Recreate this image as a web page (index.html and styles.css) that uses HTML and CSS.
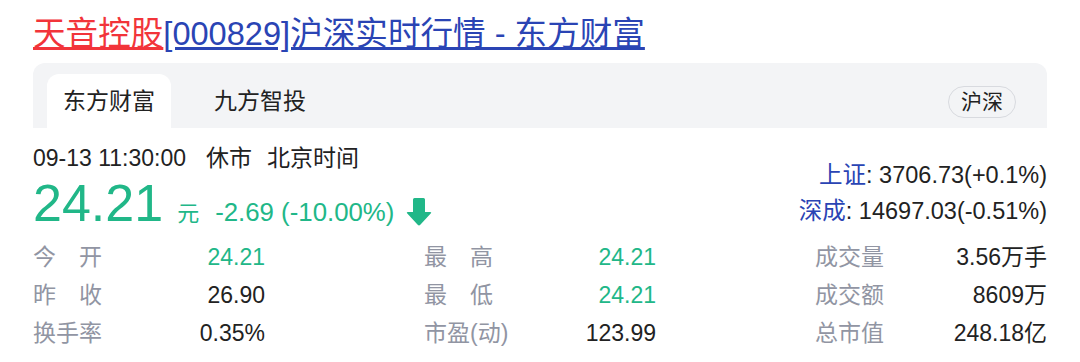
FILE: index.html
```html
<!DOCTYPE html>
<html lang="zh-CN">
<head>
<meta charset="utf-8">
<title>天音控股[000829]沪深实时行情 - 东方财富</title>
<link rel="stylesheet" href="styles.css">
</head>
<body>
<div class="page">
  <h1 class="title"><a class="title-link" href="#"><span class="title-red">天音控股</span><span class="title-blue">[000829]沪深实时行情 - 东方财富</span></a></h1>

  <div class="card">
    <div class="tabbar">
      <div class="tab tab-active">东方财富</div>
      <div class="tab">九方智投</div>
      <div class="pill">沪深</div>
    </div>

    <div class="quote">
      <div class="quote-main">
        <div class="quote-time"><span>09-13 11:30:00</span><span class="time-status">休市</span><span class="time-zone">北京时间</span></div>
        <div class="quote-price"><span class="price">24.21</span><span class="unit">元</span><span class="change">-2.69 (-10.00%)</span><svg class="arrow" width="26" height="28" viewBox="0 0 26 28"><path d="M7 1.5 Q7 0 8.5 0 H17.5 Q19 0 19 1.5 V14 H24 Q26 14 24.7 15.5 L14.3 26.8 Q13 28.2 11.7 26.8 L1.3 15.5 Q0 14 2 14 H7 Z"/></svg></div>
      </div>
      <div class="quote-index">
        <div class="index-line"><span class="index-name">上证</span>: 3706.73(+0.1%)</div>
        <div class="index-line"><span class="index-name">深成</span>: 14697.03(-0.51%)</div>
      </div>
    </div>

    <div class="stats">
      <div class="stat-col">
        <div class="stat-row"><span class="stat-label">今开</span><span class="stat-value down">24.21</span></div>
        <div class="stat-row"><span class="stat-label">昨收</span><span class="stat-value">26.90</span></div>
        <div class="stat-row"><span class="stat-label">换手率</span><span class="stat-value">0.35%</span></div>
      </div>
      <div class="stat-col">
        <div class="stat-row"><span class="stat-label">最高</span><span class="stat-value down">24.21</span></div>
        <div class="stat-row"><span class="stat-label">最低</span><span class="stat-value down">24.21</span></div>
        <div class="stat-row"><span class="stat-label">市盈(动)</span><span class="stat-value">123.99</span></div>
      </div>
      <div class="stat-col">
        <div class="stat-row"><span class="stat-label">成交量</span><span class="stat-value">3.56万手</span></div>
        <div class="stat-row"><span class="stat-label">成交额</span><span class="stat-value">8609万</span></div>
        <div class="stat-row"><span class="stat-label">总市值</span><span class="stat-value">248.18亿</span></div>
      </div>
    </div>
  </div>
</div>
</body>
</html>
```

FILE: styles.css
```css
html, body {
  margin: 0;
  padding: 0;
  background: #ffffff;
}

body {
  font-family: "Liberation Sans", Arial, "Noto Sans CJK SC", sans-serif;
  color: #222222;
  overflow: hidden;
}

.page {
  padding: 14px 33px 0 33px;
}

.title {
  margin: 0;
  font-size: 32.6px;
  font-weight: normal;
  line-height: 40px;
  white-space: nowrap;
}

.title-link {
  text-decoration: none;
}

.title-red {
  color: #f2343a;
  text-decoration: underline;
  text-decoration-color: #f2343a;
}

.title-blue {
  color: #2a44b4;
  text-decoration: underline;
  text-decoration-color: #2a44b4;
}

.card {
  margin-top: 9px;
}

.tabbar {
  display: flex;
  align-items: flex-end;
  height: 65px;
  box-sizing: border-box;
  padding: 0 31px 0 14px;
  background: #f3f4f6;
  border-radius: 12px 12px 0 0;
}

.tab {
  height: 54px;
  line-height: 54px;
  padding: 0 16px;
  font-size: 23px;
  color: #222222;
  border-radius: 12px 12px 0 0;
}

.tab + .tab {
  margin-left: 27px;
}

.tab-active {
  background: #ffffff;
}

.pill {
  margin-left: auto;
  margin-bottom: 10px;
  height: 32px;
  box-sizing: border-box;
  line-height: 30px;
  padding: 0 12px;
  font-size: 21px;
  color: #222222;
  border: 1px solid #d8dadf;
  border-radius: 16px;
}

.quote {
  display: flex;
  justify-content: space-between;
  padding-top: 15px;
}

.quote-time {
  font-size: 23px;
  line-height: 30px;
  color: #222222;
  white-space: nowrap;
}

.time-status {
  margin-left: 20px;
}

.time-zone {
  margin-left: 15px;
}

.quote-price {
  height: 56px;
  margin-top: 2px;
  line-height: 56px;
  color: #21b788;
  white-space: nowrap;
}

.price {
  font-size: 52px;
}

.unit {
  font-size: 22px;
  margin-left: 14px;
}

.change {
  font-size: 25.8px;
  margin-left: 16px;
}

.arrow {
  margin-left: 12px;
  vertical-align: -5px;
  fill: #21b788;
}

.quote-index {
  padding-top: 14px;
  text-align: right;
}

.index-line {
  font-size: 23.5px;
  line-height: 36px;
  color: #222222;
  white-space: nowrap;
}

.index-name {
  color: #2a44b4;
}

.stats {
  display: grid;
  grid-template-columns: repeat(3, 232px);
  justify-content: space-between;
  padding-top: 7px;
}

.stat-row {
  display: flex;
  justify-content: space-between;
  font-size: 23px;
  line-height: 38px;
}

.stat-label {
  width: 69px;
  color: #9195a3;
  text-align: justify;
  text-align-last: justify;
  white-space: nowrap;
}

.stat-value {
  color: #222222;
}

.stat-value.down {
  color: #21b788;
}
```
